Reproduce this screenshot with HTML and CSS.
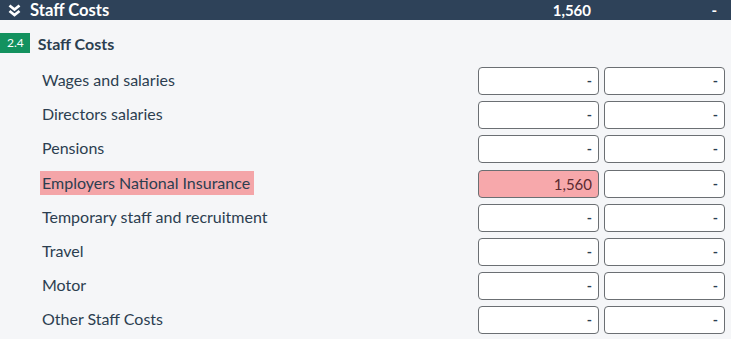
FILE: index.html
```html
<!DOCTYPE html>
<html>
    <head>
        <title>Staff Costs</title>
        <link rel="stylesheet" href="styles.css">
    </head>
    <body>
        <div class="bar">
            <div class="bar-title">
                <svg class="chev" width="13" height="13" viewBox="0 0 13 13">
                    <path d="M1.5 1.5 L6.5 5.5 L11.5 1.5" fill="none" stroke="#fff" stroke-width="2.8"/>
                    <path d="M1.5 7 L6.5 11 L11.5 7" fill="none" stroke="#fff" stroke-width="2.8"/>
                </svg>
                <span>Staff Costs</span>
            </div>
            <div class="bar-val">1,560</div>
            <div class="bar-val">-</div>
        </div>
        <div class="section">
            <div class="heading">
                <span class="badge">2.4</span>
                <h2>Staff Costs</h2>
            </div>
            <div class="row">
                <div class="label"><span>Wages and salaries</span></div>
                <div class="cell">-</div>
                <div class="cell">-</div>
            </div>
            <div class="row">
                <div class="label"><span>Directors salaries</span></div>
                <div class="cell">-</div>
                <div class="cell">-</div>
            </div>
            <div class="row">
                <div class="label"><span>Pensions</span></div>
                <div class="cell">-</div>
                <div class="cell">-</div>
            </div>
            <div class="row flagged">
                <div class="label"><span>Employers National Insurance</span></div>
                <div class="cell">1,560</div>
                <div class="cell plain">-</div>
            </div>
            <div class="row">
                <div class="label"><span>Temporary staff and recruitment</span></div>
                <div class="cell">-</div>
                <div class="cell">-</div>
            </div>
            <div class="row">
                <div class="label"><span>Travel</span></div>
                <div class="cell">-</div>
                <div class="cell">-</div>
            </div>
            <div class="row">
                <div class="label"><span>Motor</span></div>
                <div class="cell">-</div>
                <div class="cell">-</div>
            </div>
            <div class="row">
                <div class="label"><span>Other Staff Costs</span></div>
                <div class="cell">-</div>
                <div class="cell">-</div>
            </div>
        </div>
    </body>
</html>
```

FILE: styles.css
```css
body {
    margin: 0;
    background: #f5f6f8;
    color: #2c3e50;
    font-family: Lato, "Open Sans", sans-serif;
}
.bar {
    display: grid;
    grid-template-columns: 1fr 121px 121px;
    column-gap: 5px;
    align-items: center;
    height: 20px;
    padding-right: 6px;
    background: #2e4259;
    color: #fff;
    font-weight: bold;
    font-size: 15px;
}
.bar-title {
    display: flex;
    align-items: center;
    gap: 9px;
    padding-left: 8px;
    font-size: 16.6px;
}
.bar-val {
    text-align: right;
    padding-right: 8px;
}
.section {
    padding: 13px 6px 0 0;
}
.heading {
    display: flex;
    align-items: center;
    gap: 8px;
    height: 20px;
    margin-bottom: 14px;
}
.badge {
    background: #13925f;
    color: #fff;
    font-size: 12px;
    line-height: 20px;
    padding: 0 6px 0 7px;
}
h2 {
    margin: 0;
    font-size: 16px;
    font-weight: bold;
}
.row {
    display: grid;
    grid-template-columns: 1fr 121px 121px;
    column-gap: 5px;
    align-items: center;
    margin-bottom: 6.2px;
}
.label {
    padding-left: 40px;
    padding-bottom: 3px;
    font-size: 16px;
}
.label span {
    padding: 2px 4px 3px 2px;
}
.cell {
    height: 26px;
    line-height: 26px;
    border: 1px solid #6b6f73;
    border-radius: 4px;
    background: #fff;
    text-align: right;
    padding-right: 6px;
    font-size: 14px;
    font-weight: bold;
}
.flagged .label span {
    background: #f4a5a8;
}
.flagged .cell {
    background: #f7a8ab;
    color: #5a2a30;
    font-size: 15px;
    font-weight: normal;
}
.flagged .cell.plain {
    background: #fff;
    color: #2c3e50;
    font-size: 14px;
    font-weight: bold;
}
```
